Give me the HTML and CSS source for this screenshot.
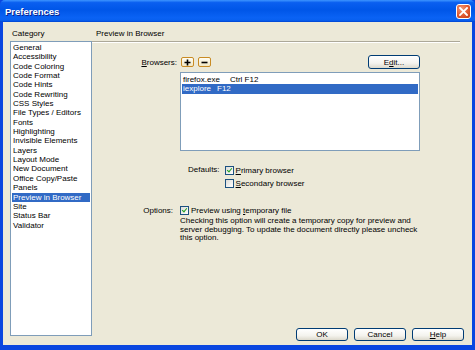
FILE: index.html
```html
<!DOCTYPE html>
<html lang="en">
<head>
    <meta charset="UTF-8">
    <title>Preferences</title>
    <link rel="stylesheet" href="styles.css">
</head>
<body>
    <div class="window">
        <div class="titlebar">
            <span class="title-text">Preferences</span>
            <div class="close-btn">
                <svg width="9" height="9" viewBox="0 0 9 9"><path d="M1 1 L8 8 M8 1 L1 8" stroke="#fff" stroke-width="1.8" stroke-linecap="square"/></svg>
            </div>
        </div>

        <div class="client">
            <div class="sidebar">
                <div class="sidebar-label">Category</div>
                <ul class="category-list">
                    <li>General</li>
                    <li>Accessibility</li>
                    <li>Code Coloring</li>
                    <li>Code Format</li>
                    <li>Code Hints</li>
                    <li>Code Rewriting</li>
                    <li>CSS Styles</li>
                    <li>File Types / Editors</li>
                    <li>Fonts</li>
                    <li>Highlighting</li>
                    <li>Invisible Elements</li>
                    <li>Layers</li>
                    <li>Layout Mode</li>
                    <li>New Document</li>
                    <li>Office Copy/Paste</li>
                    <li>Panels</li>
                    <li class="selected">Preview in Browser</li>
                    <li>Site</li>
                    <li>Status Bar</li>
                    <li>Validator</li>
                </ul>
            </div>

            <div class="main">
                <div class="section-header">Preview in Browser</div>

                <div class="field-row browsers-row">
                    <span class="field-label"><u>B</u>rowsers:</span>
                    <button class="icon-btn">
                        <svg width="7" height="7" viewBox="0 0 7 7"><path d="M3.5 0.5 V6.5 M0.5 3.5 H6.5" stroke="#000" stroke-width="1.6"/></svg>
                    </button>
                    <button class="icon-btn">
                        <svg width="7" height="7" viewBox="0 0 7 7"><path d="M0.5 3.5 H6.5" stroke="#000" stroke-width="1.6"/></svg>
                    </button>
                    <button class="xp-btn edit-btn">E<u>d</u>it...</button>
                </div>

                <ul class="browser-list">
                    <li><span class="b-name">firefox.exe</span><span class="b-key">Ctrl F12</span></li>
                    <li class="selected"><span class="b-name">iexplore</span><span class="b-key short">F12</span></li>
                </ul>

                <div class="defaults">
                    <span class="defaults-label">Defaults:</span>
                    <div class="check-group">
                        <label class="check"><span class="box checked"></span><span><u>P</u>rimary browser</span></label>
                        <label class="check"><span class="box"></span><span><u>S</u>econdary browser</span></label>
                    </div>
                </div>

                <div class="field-row options-row">
                    <span class="field-label options-label">Options:</span>
                    <label class="check"><span class="box checked"></span><span>Preview using <u>t</u>emporary file</span></label>
                </div>
                <p class="note">Checking this option will create a temporary copy for preview and server debugging. To update the document directly please uncheck this option.</p>

                <div class="footer">
                    <button class="xp-btn">OK</button>
                    <button class="xp-btn">Cancel</button>
                    <button class="xp-btn"><u>H</u>elp</button>
                </div>
            </div>
        </div>
    </div>
</body>
</html>
```

FILE: styles.css
```css
body {
    margin: 0;
    background: #0842db;
    font-family: 'Liberation Sans', Arial, sans-serif;
    font-size: 8px;
    color: #000;
}

.window {
    width: 475px;
    height: 350px;
    display: flex;
    flex-direction: column;
    background: #0a46e0;
}

.titlebar {
    height: 22px;
    flex-shrink: 0;
    display: flex;
    align-items: center;
    justify-content: space-between;
    padding: 0 4px 0 5px;
    border-radius: 5px 5px 0 0;
    background: linear-gradient(#3d95ff 0%, #0a5ff0 12%, #0056e8 45%, #0a62f4 80%, #0860f0 92%, #0043d0 100%);
}

.title-text {
    color: #fff;
    font-weight: bold;
    font-size: 9.5px;
    text-shadow: 1px 1px 0 #0a1e8a;
}

.close-btn {
    width: 15px;
    height: 15px;
    box-sizing: border-box;
    border: 1px solid #fff;
    border-radius: 3px;
    background: radial-gradient(circle at 35% 30%, #f39a78 0%, #e0582f 55%, #c13a14 100%);
    display: flex;
    align-items: center;
    justify-content: center;
}

.client {
    flex: 1;
    display: flex;
    margin: 0 3px 5px 3px;
    padding: 7px 8px 4px 7px;
    background: #ece9d8;
}

.sidebar {
    width: 82px;
    display: flex;
    flex-direction: column;
}

.sidebar-label {
    line-height: 10px;
    padding-left: 2px;
    margin-bottom: 2px;
}

.category-list,
.browser-list {
    list-style: none;
    margin: 0;
    background: #fff;
    border: 1px solid #7f9db9;
    box-sizing: border-box;
}

.category-list {
    height: 295px;
    padding: 1px 1px;
}

.category-list li,
.browser-list li {
    line-height: 9.35px;
    padding-left: 1px;
    white-space: nowrap;
}

.category-list li.selected,
.browser-list li.selected {
    background: #316ac5;
    color: #fff;
}

.main {
    flex: 1;
    display: flex;
    flex-direction: column;
}

.section-header {
    line-height: 10px;
    padding: 0 0 2px 4px;
    margin-right: 4px;
    border-bottom: 1px solid #aca899;
    box-shadow: 0 1px 0 #fff;
}

.field-row {
    display: flex;
    align-items: center;
}

.field-label {
    width: 85px;
    text-align: right;
}

.browsers-row {
    margin-top: 13px;
    height: 14px;
    padding-right: 44px;
}

.browsers-row .field-label {
    margin-right: 4px;
}

.icon-btn {
    width: 13px;
    height: 10px;
    padding: 0;
    margin-right: 4px;
    border: 1px solid #c98b24;
    border-radius: 2px;
    background: linear-gradient(#fffdf3, #f1e7c4);
    display: flex;
    align-items: center;
    justify-content: center;
}

.xp-btn {
    font-family: inherit;
    font-size: 8px;
    width: 52px;
    height: 13px;
    padding: 0;
    border: 1px solid #003c74;
    border-radius: 3px;
    background: linear-gradient(#ffffff 0%, #f4f3ee 60%, #dcd9cc 100%);
    color: #000;
    line-height: 11px;
}

.edit-btn {
    margin-left: auto;
    height: 14px;
}

.browser-list {
    margin: 3px 0 0 88px;
    width: 240px;
    height: 79px;
    padding: 2px 1px;
}

.b-key {
    margin-left: 10px;
}

.b-key.short {
    margin-left: 6px;
}

.defaults {
    display: flex;
    align-items: flex-start;
    margin: 13px 0 0 96px;
}

.defaults-label {
    line-height: 12px;
    margin-right: 5px;
}

.check-group {
    display: flex;
    flex-direction: column;
    gap: 1px;
}

.check {
    display: flex;
    align-items: center;
    height: 12px;
    gap: 2px;
}

.box {
    width: 9px;
    height: 9px;
    box-sizing: border-box;
    border: 1px solid #1c5180;
    background: linear-gradient(135deg, #dcdcd7, #fff);
    position: relative;
}

.box.checked::after {
    content: "";
    position: absolute;
    left: 2px;
    top: 0px;
    width: 2px;
    height: 4px;
    border: solid #21a121;
    border-width: 0 1.5px 1.5px 0;
    transform: rotate(40deg);
}

.options-row {
    margin-top: 15px;
    height: 12px;
}

.options-label {
    width: 81px;
    margin-right: 7px;
}

.note {
    margin: 1px 0 0 88px;
    width: 245px;
    line-height: 8.7px;
}

.footer {
    margin-top: auto;
    display: flex;
    justify-content: flex-end;
    gap: 6px;
}
```
